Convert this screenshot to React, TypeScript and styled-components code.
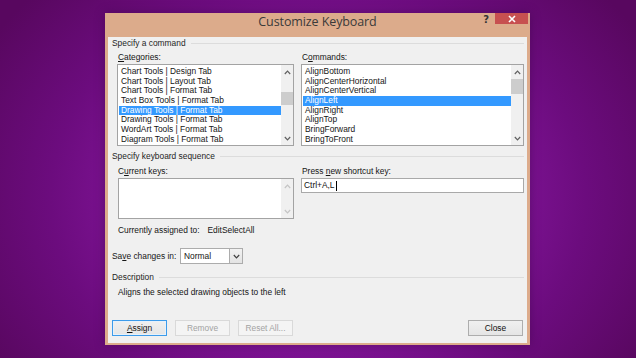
import styled, { createGlobalStyle } from "styled-components";

const GlobalStyle = createGlobalStyle`
  html, body {
    margin: 0;
    padding: 0;
  }
  body {
    font-family: "Liberation Sans", Arial, sans-serif;
    -webkit-font-smoothing: antialiased;
  }
  u {
    text-decoration-thickness: 1px;
    text-underline-offset: 1px;
  }
`;

const categories = [
  "Chart Tools | Design Tab",
  "Chart Tools | Layout Tab",
  "Chart Tools | Format Tab",
  "Text Box Tools | Format Tab",
  "Drawing Tools | Format Tab",
  "Drawing Tools | Format Tab",
  "WordArt Tools | Format Tab",
  "Diagram Tools | Format Tab",
];

const commands = [
  "AlignBottom",
  "AlignCenterHorizontal",
  "AlignCenterVertical",
  "AlignLeft",
  "AlignRight",
  "AlignTop",
  "BringForward",
  "BringToFront",
];

function Chevron({ up, color = "#606060" }: { up?: boolean; color?: string }) {
  return (
    <svg width="7" height="5" viewBox="0 0 7 5">
      <path
        d={up ? "M0.8 4 L3.5 1.2 L6.2 4" : "M0.8 1 L3.5 3.8 L6.2 1"}
        fill="none"
        stroke={color}
        strokeWidth="1.2"
      />
    </svg>
  );
}

export default function App() {
  return (
    <>
      <GlobalStyle />
      <Page>
        <Frame>
          <TitleBar>
            <Title>Customize Keyboard</Title>
            <HelpMark>?</HelpMark>
            <CloseX>
              <svg width="8" height="8" viewBox="0 0 8 8">
                <path d="M1 1 L7 7 M7 1 L1 7" stroke="#fff" strokeWidth="1.6" />
              </svg>
            </CloseX>
          </TitleBar>
          <Content>
            <SectionHeader>
              <span>Specify a command</span>
            </SectionHeader>
            <TwoCols $top={2}>
              <Field>
                <Label>
                  <u>C</u>ategories:
                </Label>
                <ListBox>
                  <Items>
                    {categories.map((c, i) => (
                      <Item key={i} $selected={i === 4}>
                        {c}
                      </Item>
                    ))}
                  </Items>
                  <ScrollBar>
                    <Arrow>
                      <Chevron up />
                    </Arrow>
                    <Track>
                      <Thumb $offset={13} $size={13} />
                    </Track>
                    <Arrow>
                      <Chevron />
                    </Arrow>
                  </ScrollBar>
                </ListBox>
              </Field>
              <Field>
                <Label>
                  C<u>o</u>mmands:
                </Label>
                <ListBox>
                  <Items>
                    {commands.map((c, i) => (
                      <Item key={i} $selected={i === 3}>
                        {c}
                      </Item>
                    ))}
                  </Items>
                  <ScrollBar>
                    <Arrow>
                      <Chevron up />
                    </Arrow>
                    <Track>
                      <Thumb $offset={0} $size={15} />
                    </Track>
                    <Arrow>
                      <Chevron />
                    </Arrow>
                  </ScrollBar>
                </ListBox>
              </Field>
            </TwoCols>

            <SectionHeader $top={4}>
              <span>Specify keyboard sequence</span>
            </SectionHeader>
            <TwoCols $top={3}>
              <Field>
                <Label>
                  C<u>u</u>rrent keys:
                </Label>
                <KeysBox>
                  <Items />
                  <ScrollBar $disabled>
                    <Arrow>
                      <Chevron up color="#c4c4c4" />
                    </Arrow>
                    <Track />
                    <Arrow>
                      <Chevron color="#c4c4c4" />
                    </Arrow>
                  </ScrollBar>
                </KeysBox>
              </Field>
              <Field>
                <Label>
                  Press <u>n</u>ew shortcut key:
                </Label>
                <ShortcutInput>
                  Ctrl+A,L
                  <Caret />
                </ShortcutInput>
              </Field>
            </TwoCols>

            <AssignedRow>
              <span>Currently assigned to:</span>
              <span>EditSelectAll</span>
            </AssignedRow>

            <SaveRow>
              <SaveLabel>
                Sa<u>v</u>e changes in:
              </SaveLabel>
              <Select>
                <SelectValue>Normal</SelectValue>
                <SelectButton>
                  <Chevron color="#404040" />
                </SelectButton>
              </Select>
            </SaveRow>

            <SectionHeader $top={7}>
              <span>Description</span>
            </SectionHeader>
            <DescriptionText>Aligns the selected drawing objects to the left</DescriptionText>

            <ButtonRow>
              <Button $variant="default">
                <u>A</u>ssign
              </Button>
              <Button $variant="disabled">Remove</Button>
              <Button $variant="disabled">Reset All...</Button>
              <Spacer />
              <Button>Close</Button>
            </ButtonRow>
          </Content>
        </Frame>
      </Page>
    </>
  );
}

const Page = styled.div`
  width: 636px;
  height: 358px;
  box-sizing: border-box;
  padding: 13px 0 0 105px;
  overflow: hidden;
  background: radial-gradient(
    ellipse 60% 85% at 50% 55%,
    #9c20b8 0%,
    #8a18a4 35%,
    #6c0c7e 70%,
    #58075f 100%
  );
`;

const Frame = styled.div`
  width: 425px;
  height: 332px;
  box-sizing: border-box;
  background: #dcab8b;
  padding: 0 3px 2px 3px;
  display: flex;
  flex-direction: column;
  box-shadow: 0 0 10px rgba(40, 0, 50, 0.35);
`;

const TitleBar = styled.div`
  height: 24px;
  flex-shrink: 0;
  display: flex;
  align-items: flex-start;
  justify-content: center;
  position: relative;
`;

const Title = styled.div`
  font-family: "Open Sans", "Liberation Sans", sans-serif;
  font-size: 12.5px;
  line-height: 16px;
  margin-top: 1px;
  color: #3a3a3a;
  letter-spacing: -0.1px;
`;

const HelpMark = styled.div`
  position: absolute;
  right: 38px;
  top: 0;
  font-family: "DejaVu Sans", sans-serif;
  font-weight: bold;
  font-size: 10px;
  line-height: 13px;
  color: #333;
`;

const CloseX = styled.div`
  position: absolute;
  right: -1px;
  top: 0;
  width: 33px;
  height: 11px;
  background: #c75050;
  display: flex;
  align-items: center;
  justify-content: center;
`;

const Content = styled.div`
  flex: 1;
  background: #f0f0f0;
  padding: 0 3px 0 4px;
  display: flex;
  flex-direction: column;
  font-size: 8.4px;
  color: #151515;
`;

const SectionHeader = styled.div<{ $top?: number }>`
  margin-top: ${(p) => p.$top ?? 0}px;
  height: 12px;
  line-height: 12px;
  display: flex;
  align-items: center;
  gap: 5px;
  color: #1e1e1e;

  &::after {
    content: "";
    flex: 1;
    height: 1px;
    background: #dcdcdc;
  }
`;

const TwoCols = styled.div<{ $top?: number }>`
  margin-top: ${(p) => p.$top ?? 0}px;
  display: grid;
  grid-template-columns: 177px 223px;
  column-gap: 7px;
  padding-left: 5px;
`;

const Field = styled.div`
  display: flex;
  flex-direction: column;
  gap: 1px;
`;

const Label = styled.div`
  height: 12px;
  line-height: 12px;
  padding-left: 1px;
`;

const ListBox = styled.div`
  height: 82px;
  box-sizing: border-box;
  border: 1px solid #a3a3a3;
  background: #fff;
  display: flex;
`;

const KeysBox = styled(ListBox)`
  height: 41px;
  margin-left: 1px;
`;

const Items = styled.div`
  flex: 1;
  padding: 2px 0 0 1px;
  display: flex;
  flex-direction: column;
`;

const Item = styled.div<{ $selected?: boolean }>`
  height: 9.7px;
  line-height: 9.7px;
  padding-left: 2px;
  white-space: nowrap;
  color: ${(p) => (p.$selected ? "#fff" : "#151515")};
  background: ${(p) => (p.$selected ? "#3399ff" : "transparent")};
`;

const ScrollBar = styled.div<{ $disabled?: boolean }>`
  width: 12px;
  background: #f0f0f0;
  display: flex;
  flex-direction: column;
`;

const Arrow = styled.div`
  height: 14px;
  display: flex;
  align-items: center;
  justify-content: center;
`;

const Track = styled.div`
  flex: 1;
  position: relative;
`;

const Thumb = styled.div<{ $offset: number; $size: number }>`
  position: absolute;
  left: 0;
  right: 0;
  top: ${(p) => p.$offset}px;
  height: ${(p) => p.$size}px;
  background: #cdcdcd;
`;

const ShortcutInput = styled.div`
  height: 15px;
  box-sizing: border-box;
  border: 1px solid #a9a9a9;
  background: #fff;
  padding-left: 2px;
  line-height: 13px;
  display: flex;
  align-items: center;
  color: #111;
`;

const Caret = styled.span`
  display: inline-block;
  width: 1px;
  height: 10px;
  background: #000;
  margin-left: 1px;
`;

const AssignedRow = styled.div`
  margin-top: 5px;
  height: 12px;
  line-height: 12px;
  padding-left: 6px;
  display: flex;
  gap: 8px;
`;

const SaveRow = styled.div`
  margin-top: 12px;
  height: 16px;
  display: flex;
  align-items: center;
`;

const SaveLabel = styled.span`
  width: 68px;
  flex-shrink: 0;
`;

const Select = styled.div`
  width: 63px;
  height: 16px;
  box-sizing: border-box;
  border: 1px solid #acacac;
  background: #fff;
  display: flex;
`;

const SelectValue = styled.div`
  flex: 1;
  padding-left: 3px;
  line-height: 14px;
`;

const SelectButton = styled.div`
  width: 12px;
  border-left: 1px solid #acacac;
  background: linear-gradient(#f2f2f2, #e3e3e3);
  display: flex;
  align-items: center;
  justify-content: center;
`;

const DescriptionText = styled.div`
  margin-top: 3px;
  height: 12px;
  line-height: 12px;
  padding-left: 6px;
`;

const ButtonRow = styled.div`
  margin-top: 22px;
  display: flex;
  gap: 8px;
  padding-right: 1px;
`;

const Spacer = styled.div`
  flex: 1;
`;

const Button = styled.div<{ $variant?: "default" | "disabled" }>`
  width: 55px;
  height: 16px;
  box-sizing: border-box;
  display: flex;
  align-items: center;
  justify-content: center;
  border: 1px solid
    ${(p) =>
      p.$variant === "default"
        ? "#3c9bea"
        : p.$variant === "disabled"
        ? "#d9d9d9"
        : "#adadad"};
  background: ${(p) =>
    p.$variant === "disabled"
      ? "#f4f4f4"
      : "linear-gradient(#f0f0f0, #e5e5e5)"};
  color: ${(p) => (p.$variant === "disabled" ? "#a3a3a3" : "#111")};
  box-shadow: ${(p) =>
    p.$variant === "default" ? "inset 0 0 0 1px #e6f1fb" : "none"};
`;
